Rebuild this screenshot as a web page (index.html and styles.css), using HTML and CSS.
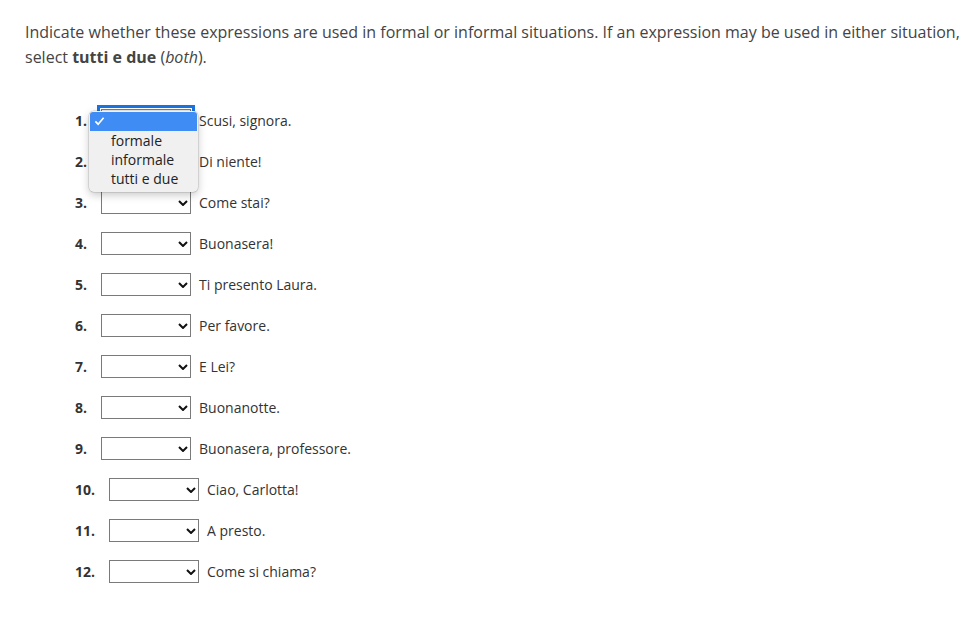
FILE: index.html
```html
<!DOCTYPE html>
<html lang="en">
<head>
    <meta charset="UTF-8">
    <meta name="viewport" content="width=device-width, initial-scale=1.0">
    <title>Formale o informale?</title>
    <link rel="stylesheet" href="styles.css">
</head>
<body>

    <p class="instructions">
        Indicate whether these expressions are used in formal or informal situations. If an expression may be used in either situation, select <strong>tutti e due</strong> (<em>both</em>).
    </p>

    <ol class="questions">
        <!-- Item 1: dropdown is open -->
        <li class="question">
            <span class="num">1.</span>
            <span class="picker open">
                <select class="choice">
                    <option></option>
                    <option>formale</option>
                    <option>informale</option>
                    <option>tutti e due</option>
                </select>
                <svg class="chevron" viewBox="0 0 10 6" width="10" height="6"><path d="M1 1l4 4 4-4" fill="none" stroke="#111" stroke-width="2"/></svg>
                <span class="menu">
                    <span class="menu-item selected">
                        <svg class="check" viewBox="0 0 12 10" width="11" height="10"><path d="M1.5 5.5l3 3 6-7" fill="none" stroke="#fff" stroke-width="1.8"/></svg>
                    </span>
                    <span class="menu-item">formale</span>
                    <span class="menu-item">informale</span>
                    <span class="menu-item">tutti e due</span>
                </span>
            </span>
            <span class="phrase">Scusi, signora.</span>
        </li>

        <li class="question">
            <span class="num">2.</span>
            <span class="picker">
                <select class="choice"><option></option><option>formale</option><option>informale</option><option>tutti e due</option></select>
                <svg class="chevron" viewBox="0 0 10 6" width="10" height="6"><path d="M1 1l4 4 4-4" fill="none" stroke="#111" stroke-width="2"/></svg>
            </span>
            <span class="phrase">Di niente!</span>
        </li>

        <li class="question">
            <span class="num">3.</span>
            <span class="picker">
                <select class="choice"><option></option><option>formale</option><option>informale</option><option>tutti e due</option></select>
                <svg class="chevron" viewBox="0 0 10 6" width="10" height="6"><path d="M1 1l4 4 4-4" fill="none" stroke="#111" stroke-width="2"/></svg>
            </span>
            <span class="phrase">Come stai?</span>
        </li>

        <li class="question">
            <span class="num">4.</span>
            <span class="picker">
                <select class="choice"><option></option><option>formale</option><option>informale</option><option>tutti e due</option></select>
                <svg class="chevron" viewBox="0 0 10 6" width="10" height="6"><path d="M1 1l4 4 4-4" fill="none" stroke="#111" stroke-width="2"/></svg>
            </span>
            <span class="phrase">Buonasera!</span>
        </li>

        <li class="question">
            <span class="num">5.</span>
            <span class="picker">
                <select class="choice"><option></option><option>formale</option><option>informale</option><option>tutti e due</option></select>
                <svg class="chevron" viewBox="0 0 10 6" width="10" height="6"><path d="M1 1l4 4 4-4" fill="none" stroke="#111" stroke-width="2"/></svg>
            </span>
            <span class="phrase">Ti presento Laura.</span>
        </li>

        <li class="question">
            <span class="num">6.</span>
            <span class="picker">
                <select class="choice"><option></option><option>formale</option><option>informale</option><option>tutti e due</option></select>
                <svg class="chevron" viewBox="0 0 10 6" width="10" height="6"><path d="M1 1l4 4 4-4" fill="none" stroke="#111" stroke-width="2"/></svg>
            </span>
            <span class="phrase">Per favore.</span>
        </li>

        <li class="question">
            <span class="num">7.</span>
            <span class="picker">
                <select class="choice"><option></option><option>formale</option><option>informale</option><option>tutti e due</option></select>
                <svg class="chevron" viewBox="0 0 10 6" width="10" height="6"><path d="M1 1l4 4 4-4" fill="none" stroke="#111" stroke-width="2"/></svg>
            </span>
            <span class="phrase">E Lei?</span>
        </li>

        <li class="question">
            <span class="num">8.</span>
            <span class="picker">
                <select class="choice"><option></option><option>formale</option><option>informale</option><option>tutti e due</option></select>
                <svg class="chevron" viewBox="0 0 10 6" width="10" height="6"><path d="M1 1l4 4 4-4" fill="none" stroke="#111" stroke-width="2"/></svg>
            </span>
            <span class="phrase">Buonanotte.</span>
        </li>

        <li class="question">
            <span class="num">9.</span>
            <span class="picker">
                <select class="choice"><option></option><option>formale</option><option>informale</option><option>tutti e due</option></select>
                <svg class="chevron" viewBox="0 0 10 6" width="10" height="6"><path d="M1 1l4 4 4-4" fill="none" stroke="#111" stroke-width="2"/></svg>
            </span>
            <span class="phrase">Buonasera, professore.</span>
        </li>

        <li class="question">
            <span class="num">10.</span>
            <span class="picker">
                <select class="choice"><option></option><option>formale</option><option>informale</option><option>tutti e due</option></select>
                <svg class="chevron" viewBox="0 0 10 6" width="10" height="6"><path d="M1 1l4 4 4-4" fill="none" stroke="#111" stroke-width="2"/></svg>
            </span>
            <span class="phrase">Ciao, Carlotta!</span>
        </li>

        <li class="question">
            <span class="num">11.</span>
            <span class="picker">
                <select class="choice"><option></option><option>formale</option><option>informale</option><option>tutti e due</option></select>
                <svg class="chevron" viewBox="0 0 10 6" width="10" height="6"><path d="M1 1l4 4 4-4" fill="none" stroke="#111" stroke-width="2"/></svg>
            </span>
            <span class="phrase">A presto.</span>
        </li>

        <li class="question">
            <span class="num">12.</span>
            <span class="picker">
                <select class="choice"><option></option><option>formale</option><option>informale</option><option>tutti e due</option></select>
                <svg class="chevron" viewBox="0 0 10 6" width="10" height="6"><path d="M1 1l4 4 4-4" fill="none" stroke="#111" stroke-width="2"/></svg>
            </span>
            <span class="phrase">Come si chiama?</span>
        </li>
    </ol>

</body>
</html>
```

FILE: styles.css
```css
* {
    box-sizing: border-box;
}

body {
    margin: 0;
    padding: 20px 0 0 25px;
    font-family: "Open Sans", "DejaVu Sans", sans-serif;
    color: #444;
    background-color: #fff;
}

.instructions {
    margin: 0;
    font-size: 16px;
    line-height: 25px;
}

.instructions strong {
    font-weight: 700;
}

/* List of expressions */
.questions {
    list-style: none;
    margin: 39px 0 0;
    padding: 0 0 0 50px;
}

.question {
    display: flex;
    align-items: center;
    height: 23px;
    margin-bottom: 18px;
    font-size: 14px;
    color: #333;
}

.num {
    font-weight: 700;
    margin-right: 14px;
}

/* Dropdown */
.picker {
    position: relative;
    display: inline-block;
    width: 90px;
    height: 23px;
}

.choice {
    -webkit-appearance: none;
    appearance: none;
    display: block;
    width: 100%;
    height: 100%;
    margin: 0;
    border: 1px solid #7a7a7a;
    border-radius: 0;
    background-color: #fff;
    font-family: inherit;
    font-size: 14px;
}

.chevron {
    position: absolute;
    right: 3px;
    top: 9px;
    pointer-events: none;
}

.phrase {
    margin-left: 8px;
}

/* Open menu for item 1 */
.picker.open .choice {
    outline: 3px solid #1a73e0;
    outline-offset: 1px;
}

.menu {
    position: absolute;
    left: -12px;
    top: 2px;
    width: 109px;
    padding: 1px 1px 4px;
    background-color: #f0f0f0;
    border-radius: 5px;
    box-shadow: 0 0 0 0.5px rgba(0, 0, 0, 0.18), 0 3px 8px rgba(0, 0, 0, 0.22);
    z-index: 2;
}

.menu-item {
    display: block;
    height: 19px;
    line-height: 19px;
    padding-left: 21px;
    font-size: 14px;
    color: #222;
    white-space: nowrap;
}

.menu-item.selected {
    position: relative;
    background-color: #3f8cf5;
    border-radius: 3px 3px 0 0;
}

.check {
    position: absolute;
    left: 4px;
    top: 4px;
}
```
